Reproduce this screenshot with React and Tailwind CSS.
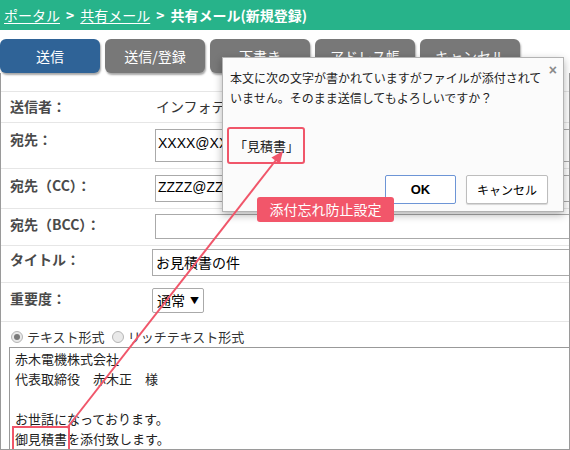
const jp = { fontFamily: '"Noto Sans CJK JP", "Noto Sans", sans-serif' };
const latin = { fontFamily: '"Liberation Sans", "Noto Sans CJK JP", sans-serif' };

const buttons = [
  { label: "送信", primary: true },
  { label: "送信/登録" },
  { label: "下書き" },
  { label: "アドレス帳" },
  { label: "キャンセル" },
];

function Row({ label, labelWidth = "w-[154px]", height, pad, children }) {
  return (
    <div className={`flex border-t border-[#e6e6e6] ${height} ${pad}`}>
      <div className={`${labelWidth} shrink-0 pl-[9px] text-[14px] leading-[20px] font-bold text-[#4a4a4a]`}>
        {label}
      </div>
      <div className="flex-1 min-w-0">{children}</div>
    </div>
  );
}

function Radio({ checked, label }) {
  return (
    <label className="flex items-center gap-[4px]">
      <span className="w-[12px] h-[12px] rounded-full border border-[#b5b5b5] bg-[#e9e9e9] flex items-center justify-center">
        {checked && <span className="w-[6px] h-[6px] rounded-full bg-[#7a7a7a]" />}
      </span>
      <span>{label}</span>
    </label>
  );
}

export default function App() {
  return (
    <div className="relative w-[570px] h-[450px] flex flex-col bg-white text-[#333]" style={jp}>
      <div className="h-[30px] shrink-0 bg-[#27b38a] px-[4px] flex items-center gap-[6px] text-[14px] text-white">
        <span className="underline underline-offset-2">ポータル</span>
        <span className="font-bold">&gt;</span>
        <span className="underline underline-offset-2">共有メール</span>
        <span className="font-bold">&gt;</span>
        <span className="font-bold">共有メール(新規登録)</span>
      </div>

      <div className="mt-[9px] flex gap-[5px] h-[34px] shrink-0">
        {buttons.map((b) => (
          <div
            key={b.label}
            className={`w-[100px] rounded-md flex items-center justify-center text-[14px] text-white shadow-[1px_2px_2px_rgba(0,0,0,0.35)] ${
              b.primary ? "bg-[#2f6397]" : "bg-[#787878]"
            }`}
          >
            {b.label}
          </div>
        ))}
      </div>

      <div className="flex-1 min-h-0 overflow-hidden border-x border-b border-[#9a9a9a] pt-[18px]">
        <Row label="送信者：" height="h-[31px]" pad="pt-[4px]">
          <div className="pl-px text-[14px] leading-[20px]">インフォテック株式会社</div>
        </Row>
        <Row label="宛先：" height="h-[46px]" pad="pt-[6px]">
          <div className="w-[440px] h-[33px] border border-[#aaa] pl-[2px] pt-[3px] text-[14px] leading-[20px] text-black" style={latin}>
            XXXX@XXXX.co.jp
          </div>
        </Row>
        <Row label="宛先（CC）：" height="h-[40px]" pad="pt-[6px]">
          <div className="w-[440px] h-[27px] border border-[#aaa] pl-[2px] pt-px text-[14px] leading-[20px] text-black" style={latin}>
            ZZZZ@ZZZZ.co.jp
          </div>
        </Row>
        <Row label="宛先（BCC）：" height="h-[37px]" pad="pt-[5px]">
          <div className="w-[440px] h-[25px] border border-[#aaa]" />
        </Row>
        <Row label="タイトル：" labelWidth="w-[151px]" height="h-[37px]" pad="pt-[3px]">
          <div className="w-[440px] h-[27px] border border-[#aaa] pl-[3px] flex items-center text-[14px] text-black">
            お見積書の件
          </div>
        </Row>
        <Row label="重要度：" labelWidth="w-[151px]" height="h-[39px]" pad="pt-[5px]">
          <div className="w-[52px] h-[25px] border border-[#aaa] rounded-[2px] flex items-center pl-[4px] gap-[5px] text-[14px] text-black">
            <span>通常</span>
            <span className="text-[9px]">▼</span>
          </div>
        </Row>
        <div className="border-t border-[#e6e6e6] h-[26px] pt-[5px] pl-[10px] flex gap-[7px] text-[13px] leading-[20px] text-[#333]">
          <Radio checked label="テキスト形式" />
          <Radio label="リッチテキスト形式" />
        </div>
        <div className="ml-[8px] w-[600px] h-[120px] border border-[#999] pl-[5px] pt-px text-[13px] leading-[20px] text-[#222]">
          <div>赤木電機株式会社</div>
          <div>代表取締役　赤木正　様</div>
          <div>&nbsp;</div>
          <div>お世話になっております。</div>
          <div>
            <span className="outline-2 outline-offset-1 outline-[#f0566a]">御見積書</span>を添付致します。
          </div>
        </div>
      </div>

      <div className="absolute left-[222px] top-[57px] w-[342px] h-[155px] bg-[#fbfbfb] border border-[#b3b3b3] shadow-[0_3px_8px_rgba(0,0,0,0.3)] flex flex-col">
        <span className="absolute right-[6px] top-[5px] text-[14px] leading-none font-bold text-[#8a8a8a]" style={latin}>×</span>
        <div className="pl-[7px] pt-[10px] text-[12px] leading-[20px] text-[#222]">
          <div>本文に次の文字が書かれていますがファイルが添付されて</div>
          <div>いません。そのまま送信してもよろしいですか？</div>
        </div>
        <div className="ml-[4px] mt-[19px] w-[78px] h-[37px] border-2 border-[#f0566a] rounded-[3px] pl-[5px] flex items-center text-[13px] text-[#222]">
          「見積書」
        </div>
        <div className="mt-[11px] pr-[15px] flex justify-end gap-[10px]">
          <div className="w-[71px] h-[29px] bg-white border border-[#6d95d6] rounded-[2px] flex items-center justify-center text-[13px] font-bold text-black" style={latin}>
            OK
          </div>
          <div className="w-[82px] h-[29px] bg-white border border-[#bdbdbd] rounded-[2px] shadow-[0_1px_1px_rgba(0,0,0,0.15)] flex items-center justify-center text-[12px] text-black">
            キャンセル
          </div>
        </div>
      </div>

      <div className="absolute left-[257px] top-[197px] w-[137px] h-[25px] bg-[#f2566a] rounded-[3px] flex items-center justify-center text-[14px] text-white">
        添付忘れ防止設定
      </div>

      <svg className="absolute inset-0 pointer-events-none" width="570" height="450" viewBox="0 0 570 450">
        <line x1="67" y1="428" x2="276" y2="160" stroke="#f0566a" strokeWidth="2" />
        <polygon points="283,151 279.8,164 271.4,157.6" fill="#f0566a" />
      </svg>
    </div>
  );
}
